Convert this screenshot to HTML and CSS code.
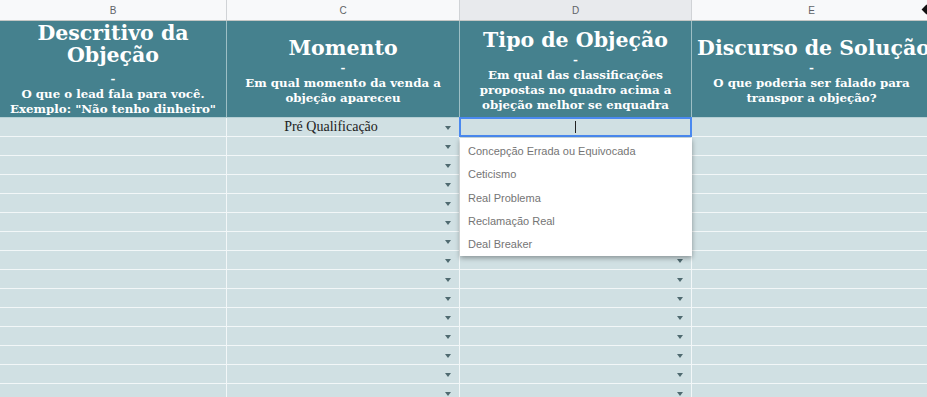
FILE: index.html
```html
<!DOCTYPE html>
<html>
<head>
    <title>Objeções</title>
    <link rel="stylesheet" href="styles.css">
</head>
<body>
    <div class="sheet">
        <div class="colbar">
            <div class="col">B</div>
            <div class="col">C</div>
            <div class="col active-col">D</div>
            <div class="col">E<span class="corner"></span></div>
        </div>

        <div class="head">
            <div class="hcell tall">
                <div class="title">Descritivo da Objeção</div>
                <div class="sub">-<br>O que o lead fala para você. Exemplo: "Não tenho dinheiro"</div>
            </div>
            <div class="hcell">
                <div class="title">Momento</div>
                <div class="sub">-<br>Em qual momento da venda a objeção apareceu</div>
            </div>
            <div class="hcell">
                <div class="title">Tipo de Objeção</div>
                <div class="sub">-<br>Em qual das classificações propostas no quadro acima a objeção melhor se enquadra</div>
            </div>
            <div class="hcell">
                <div class="title nowrap">Discurso de Solução</div>
                <div class="sub">-<br>O que poderia ser falado para transpor a objeção?</div>
            </div>
        </div>

        <div class="row">
            <div class="cell"></div>
            <div class="cell pick"><span class="value">Pré Qualificação</span><span class="arrow"></span></div>
            <div class="cell selected">
                <span class="caret"></span>
                <ul class="dropdown">
                    <li>Concepção Errada ou Equivocada</li>
                    <li>Ceticismo</li>
                    <li>Real Problema</li>
                    <li>Reclamação Real</li>
                    <li>Deal Breaker</li>
                </ul>
            </div>
            <div class="cell"></div>
        </div>
        <div class="row"><div class="cell"></div><div class="cell pick"><span class="arrow"></span></div><div class="cell pick"><span class="arrow"></span></div><div class="cell"></div></div>
        <div class="row"><div class="cell"></div><div class="cell pick"><span class="arrow"></span></div><div class="cell pick"><span class="arrow"></span></div><div class="cell"></div></div>
        <div class="row"><div class="cell"></div><div class="cell pick"><span class="arrow"></span></div><div class="cell pick"><span class="arrow"></span></div><div class="cell"></div></div>
        <div class="row"><div class="cell"></div><div class="cell pick"><span class="arrow"></span></div><div class="cell pick"><span class="arrow"></span></div><div class="cell"></div></div>
        <div class="row"><div class="cell"></div><div class="cell pick"><span class="arrow"></span></div><div class="cell pick"><span class="arrow"></span></div><div class="cell"></div></div>
        <div class="row"><div class="cell"></div><div class="cell pick"><span class="arrow"></span></div><div class="cell pick"><span class="arrow"></span></div><div class="cell"></div></div>
        <div class="row"><div class="cell"></div><div class="cell pick"><span class="arrow"></span></div><div class="cell pick"><span class="arrow"></span></div><div class="cell"></div></div>
        <div class="row"><div class="cell"></div><div class="cell pick"><span class="arrow"></span></div><div class="cell pick"><span class="arrow"></span></div><div class="cell"></div></div>
        <div class="row"><div class="cell"></div><div class="cell pick"><span class="arrow"></span></div><div class="cell pick"><span class="arrow"></span></div><div class="cell"></div></div>
        <div class="row"><div class="cell"></div><div class="cell pick"><span class="arrow"></span></div><div class="cell pick"><span class="arrow"></span></div><div class="cell"></div></div>
        <div class="row"><div class="cell"></div><div class="cell pick"><span class="arrow"></span></div><div class="cell pick"><span class="arrow"></span></div><div class="cell"></div></div>
        <div class="row"><div class="cell"></div><div class="cell pick"><span class="arrow"></span></div><div class="cell pick"><span class="arrow"></span></div><div class="cell"></div></div>
        <div class="row"><div class="cell"></div><div class="cell pick"><span class="arrow"></span></div><div class="cell pick"><span class="arrow"></span></div><div class="cell"></div></div>
        <div class="row"><div class="cell"></div><div class="cell pick"><span class="arrow"></span></div><div class="cell pick"><span class="arrow"></span></div><div class="cell"></div></div>
    </div>
</body>
</html>
```

FILE: styles.css
```css
body { margin: 0; overflow: hidden; background: #fff; font-family: "Liberation Sans", Arial, sans-serif; }
.sheet { width: 932px; }

.colbar, .head, .row { display: grid; grid-template-columns: 227px 233px 232px 240px; }

.colbar { height: 21px; background: #f8f9fa; border-bottom: 1px solid #c4c7c5; box-sizing: border-box; }
.col { display: flex; align-items: center; justify-content: center; font-size: 10px; color: #5f6368; border-right: 1px solid #d0d3d6; position: relative; }
.active-col { background: #e8eaed; }
.corner { position: absolute; left: 231px; top: 6px; width: 7px; height: 7px; background: #111; transform: rotate(45deg); }

.head { height: 97px; background: #45818e; border-bottom: 1px solid #b5cfd4; box-sizing: border-box; }
.hcell { display: flex; flex-direction: column; justify-content: center; align-items: center; text-align: center; color: #fff; font-family: "DejaVu Serif", Georgia, serif; font-weight: bold; border-right: 1px solid #9dbfc5; overflow: hidden; }
.title { font-size: 20.5px; line-height: 22px; padding: 4px 4px 0; margin-bottom: 2px; }
.tall { justify-content: flex-start; padding-top: 1px; }
.tall .title { padding-top: 0; margin-bottom: 6px; }
.nowrap { white-space: nowrap; padding-left: 8px; }
.sub { font-size: 11.8px; line-height: 15px; padding: 0 4px; }

.row { height: 19px; background: #d0e0e3; border-bottom: 1px solid #f2f7f8; box-sizing: border-box; }
.cell { border-right: 1px solid #f2f7f8; position: relative; }
.pick { display: flex; align-items: center; }
.value { flex: 1; text-align: center; padding-right: 24px; font-family: "Liberation Serif", "Times New Roman", serif; font-size: 14px; color: #222; }
.arrow { position: absolute; right: 8px; top: 8px; border-left: 3.5px solid transparent; border-right: 3.5px solid transparent; border-top: 4px solid #4f6a70; }

.selected { z-index: 2; }
.selected::before { content: ""; position: absolute; left: -1px; top: -1px; right: -1px; bottom: -1px; border: 2px solid #4a89f0; }
.caret { position: absolute; left: 115px; top: 3px; width: 1px; height: 12px; background: #222; }

.dropdown { position: absolute; left: 0; top: 20px; width: 232px; margin: 0; padding: 2px 0 0; list-style: none; background: #fff; box-shadow: 0 2px 5px rgba(0, 0, 0, 0.35); }
.dropdown li { height: 23.3px; line-height: 23px; padding-left: 8px; font-size: 11px; color: #757575; }
```
